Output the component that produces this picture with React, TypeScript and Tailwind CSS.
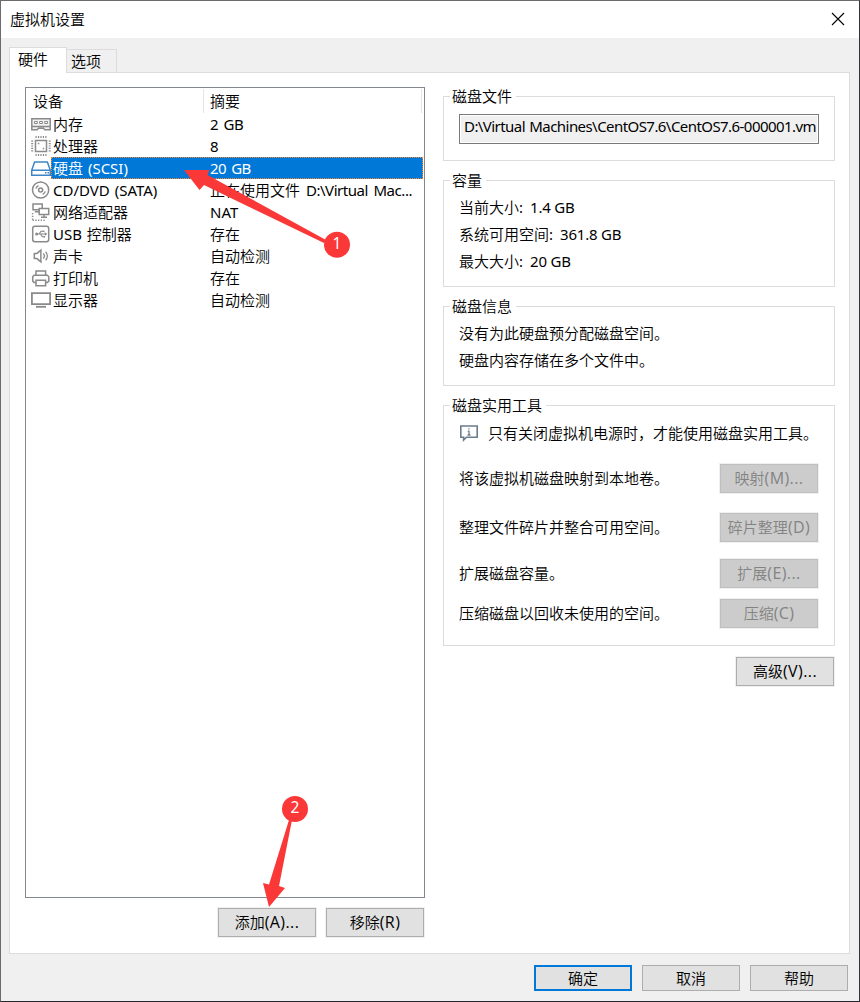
import type { ReactNode } from 'react';

const dialogFont =
  "font-['Noto_Sans','Noto_Sans_CJK_SC_DemiLight','Noto_Sans_CJK_SC_Light','Noto_Sans_CJK_SC',sans-serif]";

/* ===== Device icons ===== */
function DeviceIcon({ children, color = '#8a8a8a' }: { children: ReactNode; color?: string }) {
  return (
    <svg width="20" height="22" viewBox="0 0 20 22" fill="none" stroke={color} strokeWidth="1.5" className="shrink-0">
      {children}
    </svg>
  );
}

const icons = {
  memory: (
    <DeviceIcon>
      <path d="M.8 5.8h18.4v10.9h-5.4l-1.3-1.5h-5l-1.3 1.5H.8zM1 13.5h18" fill="#f1f1f1" />
      <path d="M3.5 8.5h2.8v2H3.5zM8.6 8.5h2.8v2H8.6zM13.7 8.5h2.8v2h-2.8z" fill="#fff" strokeWidth="1" />
    </DeviceIcon>
  ),
  cpu: (
    <DeviceIcon>
      <path d="M4.5 5.5h11v11h-11z" />
      <path d="M4.5 2h11M4.5 20h11" strokeWidth="2" strokeDasharray="1.2 1.25" />
      <path d="M1.2 5.5v11M18.7 5.5v11" strokeWidth="2" strokeDasharray="1.2 1.25" />
      <path d="M6.8 7.8h1.5v1.5H6.8zM11.7 12.7h1.5v1.5h-1.5z" fill="#8a8a8a" stroke="none" />
    </DeviceIcon>
  ),
  disk: (
    <DeviceIcon color="#3c86c6">
      <path d="M.7 13.2 3.6 5h12.8l2.9 8.2v5.1H.7zM.7 13.2h18.6" fill="#fff" />
      <path d="M14 15h1.5v1.5H14zM16.5 15H18v1.5h-1.5z" fill="#3c86c6" stroke="none" />
    </DeviceIcon>
  ),
  cd: (
    <DeviceIcon>
      <circle cx="9.6" cy="11" r="8.1" />
      <circle cx="9.6" cy="11" r="2" />
      <path d="M4.9 9.6a5 5 0 0 1 2.6-2.9M14.3 12.4a5 5 0 0 1-2.6 2.9" strokeWidth="1.3" />
    </DeviceIcon>
  ),
  network: (
    <DeviceIcon>
      <path d="M7.6 8.7H2V2.9h9.2v4M3.8 10.8h3.8M8.2 7.6h9.5v6H8.2zM13 13.6v2.4M10 16.3h6" />
      <path d="M1.6 12V19M1.6 19.2h12.6" strokeDasharray="1.3 1.4" />
    </DeviceIcon>
  ),
  usb: (
    <DeviceIcon>
      <rect x="1.7" y="3.2" width="16" height="15.6" rx="2.2" />
      <path d="M6 11h9M8 11l2-2.7h2M9.4 11l2 2.7H13" strokeWidth="1.1" />
      <circle cx="5.6" cy="11" r="1.5" fill="#8a8a8a" stroke="none" />
      <path d="m13.8 9.2 2.5 1.8-2.5 1.8zM11.7 7.5h1.7v1.6h-1.7zM12.5 12.9h1.6v1.6h-1.6z" fill="#8a8a8a" stroke="none" />
    </DeviceIcon>
  ),
  sound: (
    <DeviceIcon>
      <path d="M3.3 8.4H6l3.9-3.3v11.8L6 13.6H3.3z" />
      <path d="M12.3 8.5c1.3 1.4 1.3 3.6 0 5M14.6 6.8c2.3 2.3 2.3 6.1 0 8.4" strokeWidth="1.3" />
    </DeviceIcon>
  ),
  printer: (
    <DeviceIcon>
      <path d="M5 8.3V4h9.6v4.3M4.8 15.4H3.1l-1.4-1.3V9.7l1.4-1.4h13.3l1.4 1.4v4.4l-1.4 1.3h-1.7M5 13.2h9.6v5.5H5z" />
    </DeviceIcon>
  ),
  display: (
    <DeviceIcon>
      <path d="M.9 4.2h18.2v11H.9z" strokeWidth="1.8" />
      <path d="M5 17.8h10" strokeWidth="1.8" />
    </DeviceIcon>
  ),
};

const devices = [
  { icon: icons.memory, name: '内存', summary: '2 GB', tracking: 'tracking-[-0.5px]' },
  { icon: icons.cpu, name: '处理器', summary: '8' },
  { icon: icons.disk, name: '硬盘 (SCSI)', summary: '20 GB', tracking: 'tracking-[-0.6px]', selected: true },
  { icon: icons.cd, name: 'CD/DVD (SATA)', file: 'D:\\Virtual Mac...', summary: '正在使用文件 ' },
  { icon: icons.network, name: '网络适配器', summary: 'NAT' },
  { icon: icons.usb, name: 'USB 控制器', summary: '存在' },
  { icon: icons.sound, name: '声卡', summary: '自动检测' },
  { icon: icons.printer, name: '打印机', summary: '存在' },
  { icon: icons.display, name: '显示器', summary: '自动检测' },
];

/* ===== Controls ===== */
function Button({ label, hint, disabled = false }: { label: string; hint: string; disabled?: boolean }) {
  return (
    <button
      disabled={disabled}
      className={[
        'flex h-[29px] w-[98px] shrink-0 items-center justify-center border pb-0.5 leading-5 whitespace-nowrap ring-1 ring-[#f0f0f0]',
        disabled ? 'border-[#bfbfbf] bg-[#cccccc] text-[#838383]' : 'border-[#adadad] bg-[#e1e1e1] text-black',
      ].join(' ')}
    >
      {label}
      <span className="font-['Open_Sans',sans-serif] text-base leading-5 tracking-[0.4px]">{hint}</span>
    </button>
  );
}

function FooterButton({ children, primary = false }: { children: ReactNode; primary?: boolean }) {
  return (
    <button
      className={[
        'h-[26px] w-[98px] bg-[#e1e1e1] text-[15px] leading-5',
        primary ? 'border-2 border-[#0078d7]' : 'border border-[#adadad]',
      ].join(' ')}
    >
      {children}
    </button>
  );
}

function Group({ title, className, children }: { title: string; className: string; children: ReactNode }) {
  return (
    <section className={['flex w-[392px] flex-col border border-[#dcdcdc] pl-[15px]', className].join(' ')}>
      <h2 className="-mt-[11px] -ml-[9px] h-5 self-start bg-white pr-1 pl-0.5 leading-5">{title}</h2>
      {children}
    </section>
  );
}

function Capacity({ label, value }: { label: string; value: string }) {
  return (
    <p>
      {label}:<span className="ml-[7px] tracking-[-0.2px]">{value}</span>
    </p>
  );
}

function UtilityRow({ label, hint, action, className }: { label: string; hint: string; action: string; className?: string }) {
  return (
    <div className={['flex items-center justify-between pr-4', className].join(' ')}>
      <span>{label}</span>
      <Button disabled label={action} hint={hint} />
    </div>
  );
}

/* ===== Hardware list ===== */
function DeviceList() {
  return (
    <div className="h-[811px] w-[400px] border border-[#828790] bg-white">
      <div className="flex h-[25px] leading-[26px]">
        <span className="w-[177px] pl-[7px]">设备</span>
        <span className="mt-px h-6 w-[219px] border-x border-[#e5e5e5] pl-1.5 leading-6">摘要</span>
      </div>
      {devices.map((device) => (
        <div key={device.name} className="flex h-[22px] pl-[5px]">
          {device.icon}
          <div
            className={[
              'flex w-[372px] border border-dotted leading-5',
              device.selected ? 'border-[#ff8728] bg-[#0078d7] text-white' : 'border-transparent',
            ].join(' ')}
          >
            <span className="w-[158px] pl-px [word-spacing:1px]">{device.name}</span>
            <span className={['whitespace-pre [word-spacing:2px]', device.tracking].join(' ')}>
              {device.summary}
              {device.file && <span className="tracking-[-0.45px]">{device.file}</span>}
            </span>
          </div>
        </div>
      ))}
    </div>
  );
}

/* ===== Numbered callouts over the dialog ===== */
function Callouts() {
  return (
    <svg className="pointer-events-none absolute -top-px -left-px" width="860" height="1002" fill="#fb3838">
      <path d="M184 170 209.5 170 207.5 175 326 240 324 243 204 185 199.5 190z" />
      <circle cx="337" cy="244.7" r="13" />
      <path d="M289 820 292 820 279 886 285 888 269 907 263 883 269 884.5z" />
      <circle cx="295" cy="809" r="13" />
      <g fill="#fff" fontSize="15.5" textAnchor="middle">
        <text x="337" y="249">1</text>
        <text x="295" y="813">2</text>
      </g>
    </svg>
  );
}

export default function App() {
  return (
    <div
      className={[
        'relative flex h-[1002px] w-[860px] flex-col overflow-hidden border border-t-[#6b6b6b] border-r-[#333338] border-b-[#25252b] border-l-[#6b6b6b] bg-[#f0f0f0] text-[15px] text-black',
        dialogFont,
      ].join(' ')}
    >
      <header className="flex h-[37px] items-center justify-between bg-white pr-[14px] pb-px pl-[9px]">
        <h1>虚拟机设置</h1>
        <svg width="14" height="14" viewBox="0 0 14 14" stroke="#000" strokeWidth="1.1">
          <path d="m1 1 12 12M13 1 1 13" />
        </svg>
      </header>

      <nav className="mt-[9px] ml-2 flex h-[26px] items-end">
        <div className="z-10 h-[26px] w-[58px] border border-b-0 border-[#dcdcdc] bg-white pl-2 leading-[22px]">
          硬件
        </div>
        <div className="h-6 w-[50px] border border-b-0 border-l-0 border-[#dcdcdc] pl-1 leading-[23px]">选项</div>
      </nav>

      <main className="-mt-px ml-2 flex h-[882px] w-[841px] border border-[#dcdcdc] bg-white pt-[14px] pl-[15px]">
        <div className="w-[400px]">
          <DeviceList />
          <div className="mt-[10px] flex justify-end gap-[10px] pr-px">
            <Button label="添加" hint="(A)..." />
            <Button label="移除" hint="(R)" />
          </div>
        </div>

        <div className="ml-[18px] flex flex-col pt-[9px]">
          <Group title="磁盘文件" className="h-[65px]">
            <div className="mt-2 h-[30px] w-[360px] border border-[#7a7a7a] bg-[#f0f0f0] pl-1 leading-[23px] whitespace-nowrap inset-ring-1 inset-ring-white">
              <span className="tracking-[-0.56px] [word-spacing:1px]">D:\Virtual Machines\CentOS7.6\CentOS7.6-000001.vm</span>
            </div>
          </Group>

          <Group title="容量" className="mt-[19px] h-[107px]">
            <div className="mt-1 leading-[27px]">
              <Capacity label="当前大小" value="1.4 GB" />
              <Capacity label="系统可用空间" value="361.8 GB" />
              <Capacity label="最大大小" value="20 GB" />
            </div>
          </Group>

          <Group title="磁盘信息" className="mt-[19px] h-[80px]">
            <div className="mt-1 leading-[27px]">
              <p>没有为此硬盘预分配磁盘空间。</p>
              <p>硬盘内容存储在多个文件中。</p>
            </div>
          </Group>

          <Group title="磁盘实用工具" className="mt-[19px] h-[241px]">
            <div className="mt-2 flex h-5 items-center leading-5">
              <svg width="20" height="18" viewBox="0 0 20 18" fill="none" stroke="#6b7c8c" strokeWidth="1.6">
                <path d="M1.8 2h16.4v11.2H7.4L4.6 16v-2.8H1.8z" />
                <path d="M10 4.2v1.4M10 6.8v4M8.7 7.2H10M8.5 11h3" strokeWidth="1.3" />
              </svg>
              <span className="ml-[9px] whitespace-nowrap">只有关闭虚拟机电源时，才能使用磁盘实用工具。</span>
            </div>
            <UtilityRow label="将该虚拟机磁盘映射到本地卷。" action="映射" hint="(M)..." className="mt-[21px]" />
            <UtilityRow label="整理文件碎片并整合可用空间。" action="碎片整理" hint="(D)" className="mt-5" />
            <UtilityRow label="扩展磁盘容量。" action="扩展" hint="(E)..." className="mt-[17px]" />
            <UtilityRow label="压缩磁盘以回收未使用的空间。" action="压缩" hint="(C)" className="mt-[11px]" />
          </Group>

          <div className="mt-[11px] flex justify-end pr-px">
            <Button label="高级" hint="(V)..." />
          </div>
        </div>
      </main>

      <footer className="mt-[11px] flex justify-end gap-[10px] pr-[11px]">
        <FooterButton primary>确定</FooterButton>
        <FooterButton>取消</FooterButton>
        <FooterButton>帮助</FooterButton>
      </footer>

      <Callouts />
    </div>
  );
}
